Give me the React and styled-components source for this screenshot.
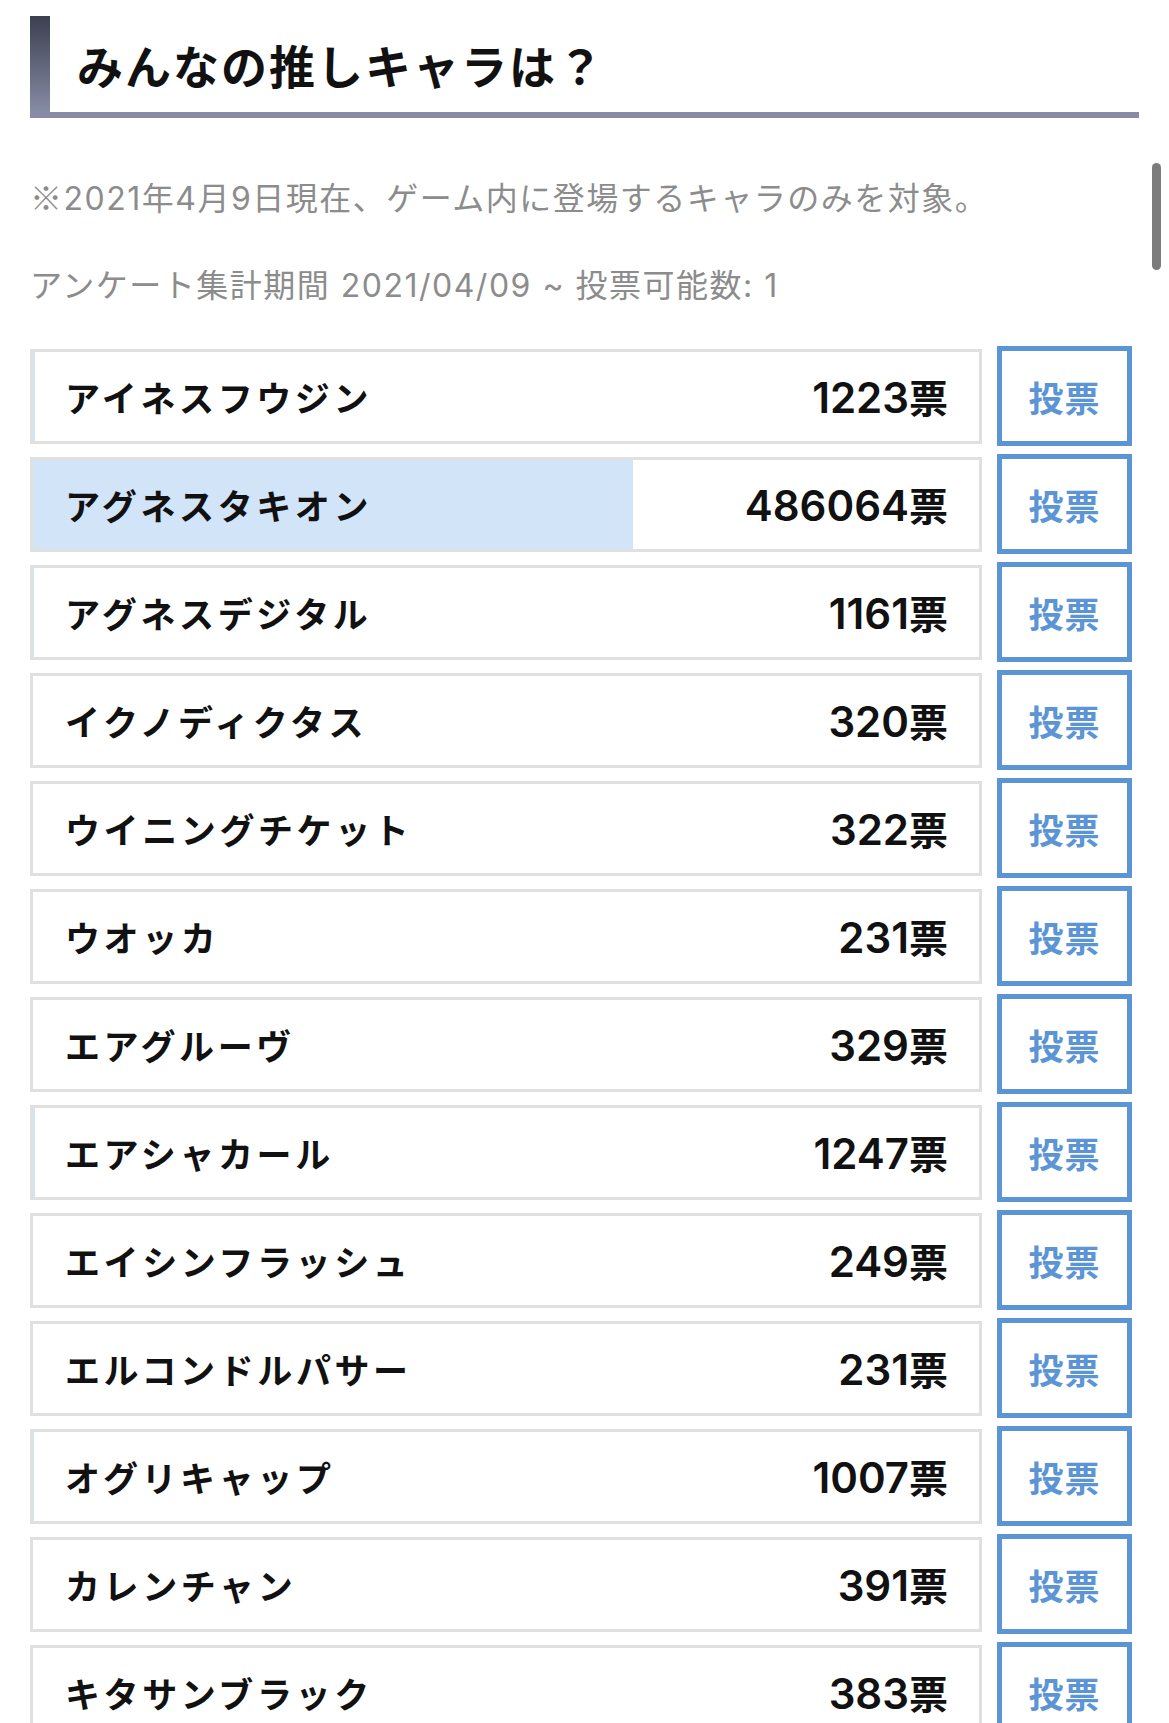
import styled, { createGlobalStyle } from "styled-components";

const GlobalStyle = createGlobalStyle`
  html {
    scrollbar-width: none;
  }
  body {
    margin: 0;
    background: #fff;
    font-family: Inter, "Noto Sans CJK JP", sans-serif;
    color: #111;
  }
`;

const TOTAL_VOTES = 766800;

const characters = [
  { name: "アイネスフウジン", votes: 1223 },
  { name: "アグネスタキオン", votes: 486064 },
  { name: "アグネスデジタル", votes: 1161 },
  { name: "イクノディクタス", votes: 320 },
  { name: "ウイニングチケット", votes: 322 },
  { name: "ウオッカ", votes: 231 },
  { name: "エアグルーヴ", votes: 329 },
  { name: "エアシャカール", votes: 1247 },
  { name: "エイシンフラッシュ", votes: 249 },
  { name: "エルコンドルパサー", votes: 231 },
  { name: "オグリキャップ", votes: 1007 },
  { name: "カレンチャン", votes: 391 },
  { name: "キタサンブラック", votes: 383 },
];

const Page = styled.main`
  padding: 16px 30px 0;
`;

const Heading = styled.h1`
  margin: 0;
  height: 96px;
  display: flex;
  align-items: center;
  padding-left: 47px;
  font-size: 46px;
  font-weight: 700;
  letter-spacing: 2px;
  color: #111;
  border-bottom: 6px solid #878ba7;
  background: linear-gradient(#3c3f50, #8b90aa) no-repeat;
  background-size: 20px 100%;
  background-origin: border-box;
`;

const Note = styled.p`
  margin: ${(p) => p.$gap}px 0 0;
  height: 48px;
  font-size: 32px;
  line-height: 48px;
  letter-spacing: 1.5px;
  color: #8c8c8c;
`;

/* the reference mark has to come from the CJK face to get its full width */
const Mark = styled.span`
  font-family: "Noto Sans CJK JP", sans-serif;
  line-height: 1;
`;

const PollList = styled.ul`
  list-style: none;
  margin: 36px 0 0;
  padding: 0 7px 0 0;
  display: flex;
  flex-direction: column;
  gap: 8px;
`;

const PollRow = styled.li`
  display: flex;
  align-items: center;
  gap: 15px;
  height: 100px;
`;

const ResultBar = styled.div`
  flex: 1;
  height: 95px;
  box-sizing: border-box;
  border: 3px solid #e0e0e0;
  background: linear-gradient(
    to right,
    #d1e4f8 ${(p) => p.$ratio}%,
    #fff ${(p) => p.$ratio}%
  );
  display: flex;
  align-items: center;
  justify-content: space-between;
  padding: 0 31px 0 32px;
`;

const Name = styled.span`
  font-size: 35px;
  font-weight: 700;
  letter-spacing: 3.6px;
`;

const Count = styled.span`
  font-size: 42px;
  font-weight: 600;
`;

const Unit = styled.span`
  font-size: 39px;
  font-weight: 700;
`;

const VoteButton = styled.button`
  width: 135px;
  height: 100px;
  box-sizing: border-box;
  border: 5px solid #5b95d5;
  background: #fff;
  color: #5b95d5;
  font-family: inherit;
  font-size: 35px;
  font-weight: 700;
  letter-spacing: 1px;
  padding: 0;
  cursor: pointer;
`;

const ScrollThumb = styled.div`
  position: fixed;
  top: 163px;
  right: 8px;
  width: 9px;
  height: 107px;
  border-radius: 5px;
  background: #7c7c7c;
`;

const App = () => {
  return (
    <>
      <GlobalStyle />
      <Page>
        <Heading>みんなの推しキャラは？</Heading>
        <Note $gap={57}>
          <Mark>※</Mark>2021年4月9日現在、ゲーム内に登場するキャラのみを対象。
        </Note>
        <Note $gap={39}>アンケート集計期間 2021/04/09 ~ 投票可能数: 1</Note>
        <PollList>
          {characters.map((c) => (
            <PollRow key={c.name}>
              <ResultBar $ratio={((c.votes / TOTAL_VOTES) * 100).toFixed(2)}>
                <Name>{c.name}</Name>
                <Count>
                  {c.votes}
                  <Unit>票</Unit>
                </Count>
              </ResultBar>
              <VoteButton>投票</VoteButton>
            </PollRow>
          ))}
        </PollList>
      </Page>
      <ScrollThumb />
    </>
  );
};

export default App;
